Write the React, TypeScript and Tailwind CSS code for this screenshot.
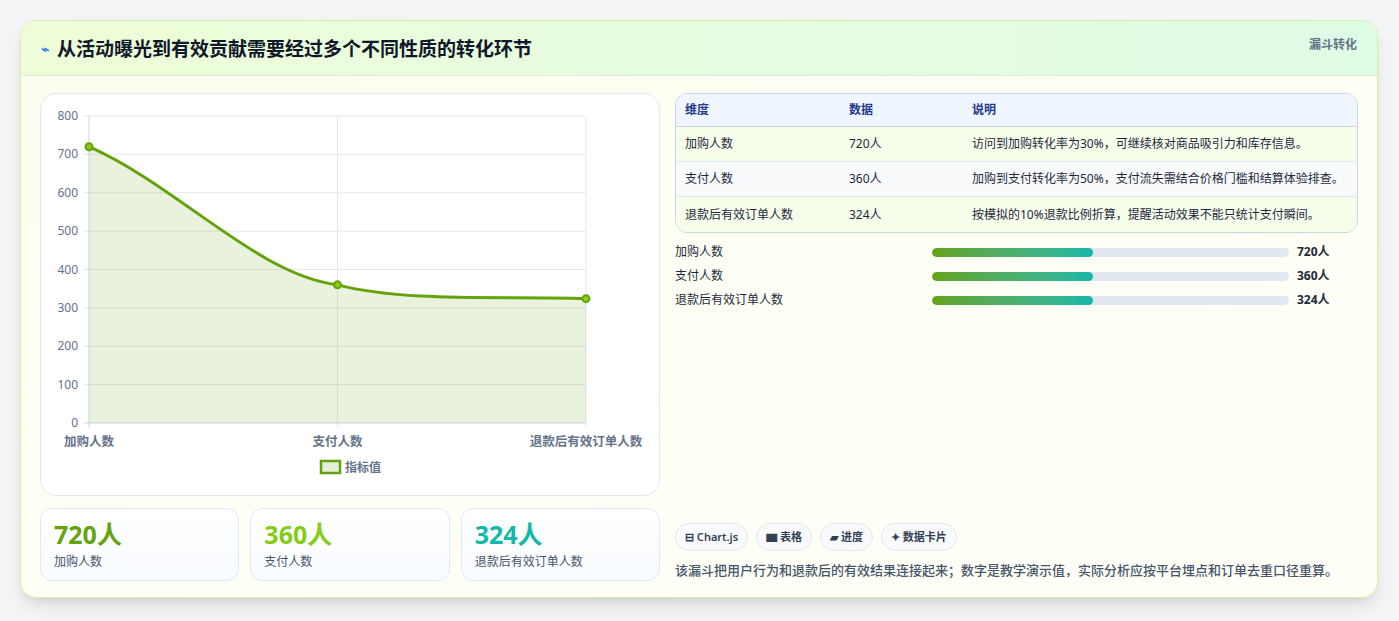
import React from "react";

const font = { fontFamily: '"Noto Sans", "Noto Sans CJK SC", sans-serif' };

const rows = [
  { name: "加购人数", value: "720人", note: "访问到加购转化率为30%，可继续核对商品吸引力和库存信息。" },
  { name: "支付人数", value: "360人", note: "加购到支付转化率为50%，支付流失需结合价格门槛和结算体验排查。" },
  { name: "退款后有效订单人数", value: "324人", note: "按模拟的10%退款比例折算，提醒活动效果不能只统计支付瞬间。" },
];

function Chart() {
  const x0 = 48, x1 = 545, y0 = 22, y1 = 329;
  const yOf = (v: number) => y1 - (v / 800) * (y1 - y0);
  const xs = [x0, (x0 + x1) / 2, x1];
  const ys = [yOf(720), yOf(360), yOf(324)];
  const line = `M${xs[0]},${ys[0]} C${xs[0] + 90},${ys[0] + 40} ${xs[1] - 80},${ys[1] - 10} ${xs[1]},${ys[1]} C${xs[1] + 70},${ys[1] + 18} ${xs[2] - 80},${ys[2] - 3} ${xs[2]},${ys[2]}`;
  return (
    <svg width="620" height="403" viewBox="0 0 620 403" className="block">
      {[0, 100, 200, 300, 400, 500, 600, 700, 800].map((v) => (
        <g key={v}>
          <line x1={x0 - 5} x2={x1} y1={yOf(v)} y2={yOf(v)} stroke={v === 0 ? "#cbd5e1" : "#e5e7eb"} />
          <text x={x0 - 11} y={yOf(v) + 4} textAnchor="end" fontSize="12" fill="#64748b" style={font}>{v}</text>
        </g>
      ))}
      {xs.map((x, i) => (
        <line key={i} x1={x} x2={x} y1={y0} y2={y1 + 5} stroke={i === 0 ? "#cbd5e1" : "#e5e7eb"} />
      ))}
      <path d={`${line} L${x1},${y1} L${x0},${y1} Z`} fill="#65a30d" fillOpacity="0.14" />
      <path d={line} fill="none" stroke="#65a30d" strokeWidth="3" />
      {xs.map((x, i) => (
        <circle key={i} cx={x} cy={ys[i]} r="3.5" fill="#84cc16" stroke="#65a30d" strokeWidth="2" />
      ))}
      {["加购人数", "支付人数", "退款后有效订单人数"].map((t, i) => (
        <text key={t} x={xs[i]} y={352} textAnchor="middle" fontSize="12.5" fill="#64748b" fontWeight="600" style={font}>{t}</text>
      ))}
      <rect x="280" y="367" width="19" height="12" fill="#e4efd8" stroke="#65a30d" strokeWidth="2.5" />
      <text x="304" y="377.5" fontSize="12" fill="#64748b" fontWeight="600" style={font}>指标值</text>
    </svg>
  );
}

export default function App() {
  return (
    <div className="min-h-screen bg-[#f3f4f6] pt-5 px-5" style={font}>
      <div className="w-[1358px] h-[578px] rounded-2xl border border-[#d9f0a3] bg-gradient-to-br from-[#fbfff0] to-[#fffff8] shadow-lg overflow-hidden flex flex-col">
        <div className="h-[55px] shrink-0 flex justify-between items-start px-5 border-b border-[#e2ebd8] bg-gradient-to-r from-[#eefdd8] to-[#defbe6]">
          <div className="flex items-center gap-2 pt-[14px]">
            <span className="text-[14px] font-bold text-[#3b82f6] leading-none">⌁</span>
            <h1 className="text-[19px] font-bold text-[#0f172a]">从活动曝光到有效贡献需要经过多个不同性质的转化环节</h1>
          </div>
          <span className="pt-[15px] text-[12px] font-semibold text-[#64748b]">漏斗转化</span>
        </div>
        <div className="flex gap-[15px] px-[19px] pt-[17px]">
          <div className="w-[620px] flex flex-col gap-3">
            <div className="h-[403px] rounded-2xl border border-[#e2e8f0] bg-white overflow-hidden">
              <Chart />
            </div>
            <div className="grid grid-cols-3 gap-[11px]">
              {[
                ["720人", "加购人数", "text-[#65a30d]"],
                ["360人", "支付人数", "text-[#84cc16]"],
                ["324人", "退款后有效订单人数", "text-[#14b8a6]"],
              ].map(([v, l, c]) => (
                <div key={l} className="h-[73px] rounded-xl border border-[#dbeafe] bg-gradient-to-b from-white to-[#f8fbff] px-[13px] pt-[9px]">
                  <div className={`text-[25px] font-bold leading-[32px] ${c}`}>{v}</div>
                  <div className="text-[12px] text-[#475569] mt-[3px]">{l}</div>
                </div>
              ))}
            </div>
          </div>
          <div className="flex-1 flex flex-col">
            <div className="rounded-xl border border-[#cbd5e1] overflow-hidden text-[12px]">
              <div className="flex h-[33px] items-center bg-[#eff6ff] border-b border-[#cbd5e1] text-[#1e3a8a] font-semibold px-[9px]">
                <div className="w-[164px]">维度</div>
                <div className="w-[123px]">数据</div>
                <div>说明</div>
              </div>
              {rows.map((r, i) => (
                <div key={r.name} className={`flex h-[35px] items-center px-[9px] text-[#1e293b] ${i < 2 ? "border-b border-[#e2e8f0]" : ""} ${i === 1 ? "bg-[#f8fafc]" : "bg-[#f7fdeb]"}`}>
                  <div className="w-[164px]">{r.name}</div>
                  <div className="w-[123px]">{r.value}</div>
                  <div>{r.note}</div>
                </div>
              ))}
            </div>
            <div className="flex flex-col gap-[10px] mt-[12px]">
              {rows.map((r) => (
                <div key={r.name} className="flex items-center h-[14px] text-[12px] text-[#1e293b]">
                  <div className="w-[257px]">{r.name}</div>
                  <div className="w-[357px] h-[9px] rounded-full bg-[#e2e8f0] overflow-hidden">
                    <div className="h-full w-[45%] rounded-full bg-gradient-to-r from-[#65a30d] to-[#14b8a6]" />
                  </div>
                  <div className="ml-2 font-bold">{r.value}</div>
                </div>
              ))}
            </div>
            <div className="mt-[216px] flex gap-2 text-[11px] font-semibold text-[#334155]">
              {["⊟ Chart.js", "▆ 表格", "▰ 进度", "✦ 数据卡片"].map((c) => (
                <span key={c} className="h-[28px] px-[9px] rounded-full border border-[#e2e8f0] bg-[#f8fafc] flex items-center">{c}</span>
              ))}
            </div>
            <p className="mt-[10px] text-[13px] text-[#475569] font-medium">该漏斗把用户行为和退款后的有效结果连接起来；数字是教学演示值，实际分析应按平台埋点和订单去重口径重算。</p>
          </div>
        </div>
      </div>
    </div>
  );
}
